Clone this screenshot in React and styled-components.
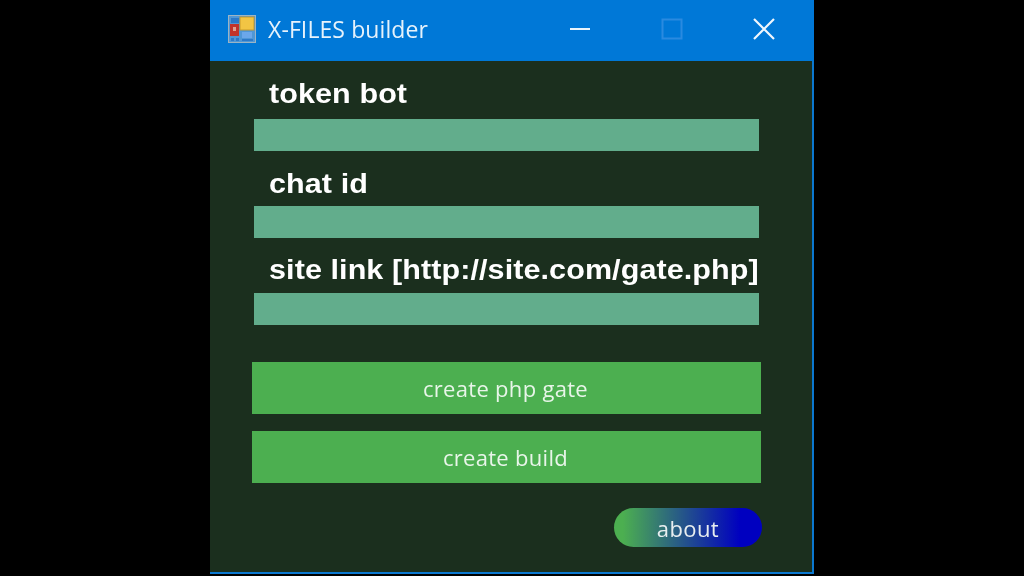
import React from "react";
import styled, { createGlobalStyle } from "styled-components";

const GlobalStyle = createGlobalStyle`
  html, body {
    margin: 0;
    padding: 0;
    width: 1024px;
    height: 576px;
    overflow: hidden;
    background: #000;
  }
`;

const Page = styled.div`
  width: 1024px;
  height: 576px;
  background: #000;
  display: flex;
  align-items: flex-start;
  padding-left: 210px;
  box-sizing: border-box;
`;

const Window = styled.div`
  width: 604px;
  height: 574px;
  box-sizing: border-box;
  background: #1b2f1e;
  border-right: 2px solid #0b78d0;
  border-bottom: 2px solid #0b78d0;
  display: flex;
  flex-direction: column;
  filter: blur(0.55px);
`;

const TitleBar = styled.div`
  height: 61px;
  margin-right: -2px;
  flex: none;
  box-sizing: border-box;
  background: #0078d7;
  display: flex;
  align-items: center;
  padding: 0 4px 4px 18px;
  color: #e6f2fb;
  font-family: "Open Sans", "Noto Sans", sans-serif;
  font-size: 23px;
`;

const AppTitle = styled.span`
  margin-left: 12px;
  flex: 1;
  letter-spacing: 0.1px;
`;

const WinButton = styled.div`
  width: 92px;
  height: 40px;
  display: flex;
  align-items: center;
  justify-content: center;
  svg {
    display: block;
  }
`;

const Form = styled.div`
  flex: 1;
  display: flex;
  flex-direction: column;
  padding: 3px 0 0 44px;
`;

const Label = styled.div`
  height: 55px;
  padding: ${(props) => props.$top}px 0 0 15px;
  box-sizing: border-box;
  color: #fff;
  font-family: "Liberation Sans", Arial, sans-serif;
  font-weight: 700;
  font-size: 28px;
  letter-spacing: 0.08px;
  line-height: 30px;
  white-space: nowrap;
`;

// the source is a stretched capture, so the letters run wider than they are tall
const LabelText = styled.span`
  display: inline-block;
  transform: scaleX(1.09);
  transform-origin: left center;
`;

const Input = styled.div`
  width: 505px;
  height: 32px;
  background: #62ad8c;
`;

const Actions = styled.div`
  display: flex;
  flex-direction: column;
  gap: 17px;
  margin: 37px 0 0 -2px;
  width: 509px;
`;

const ActionButton = styled.button`
  height: 52px;
  border: 0;
  padding: 0 2px 0 0;
  background: #4caf50;
  color: #e8f5e9;
  font-family: "Open Sans", "Noto Sans", sans-serif;
  font-size: 22px;
  letter-spacing: 0.3px;
`;

const AboutRow = styled.div`
  display: flex;
  justify-content: flex-end;
  margin: 25px 0 0 -2px;
  width: 510px;
`;

const AboutButton = styled.button`
  width: 148px;
  height: 39px;
  border: 0;
  padding: 0;
  border-radius: 20px;
  background: linear-gradient(90deg, #4caf50 6%, #0000c0 85%);
  color: #e8eef0;
  font-family: "Open Sans", "Noto Sans", sans-serif;
  font-size: 22px;
  letter-spacing: 0.4px;
`;

const AppIcon = () => (
  <svg width="28" height="28" viewBox="0 0 28 28">
    <rect x="0.5" y="0.5" width="27" height="27" fill="#4f97d6" stroke="#9cb4c4" />
    <rect x="3" y="3" width="8" height="5" fill="#2b79c9" />
    <rect x="12" y="2" width="14" height="13" fill="#f2c544" stroke="#c79a2b" />
    <rect x="2" y="9" width="9" height="12" fill="#c2332a" />
    <rect x="5" y="12" width="3" height="4" fill="#e0a090" />
    <rect x="14" y="17" width="10" height="6" fill="#6ba7ea" />
    <rect x="3" y="23" width="3" height="3" fill="#2b79c9" />
    <rect x="8" y="23" width="3" height="3" fill="#2b79c9" />
    <rect x="14" y="24" width="11" height="2" fill="#2b79c9" />
  </svg>
);

const fields = [
  { name: "token bot", top: 15 },
  { name: "chat id", top: 18 },
  { name: "site link [http://site.com/gate.php]", top: 17 },
];

export default function App() {
  return (
    <Page>
      <GlobalStyle />
      <Window>
        <TitleBar>
          <AppIcon />
          <AppTitle>X-FILES builder</AppTitle>
          <WinButton>
            <svg width="22" height="22" viewBox="0 0 22 22">
              <path d="M1 11H21" stroke="#eaf4fc" strokeWidth="2" />
            </svg>
          </WinButton>
          <WinButton>
            <svg width="22" height="22" viewBox="0 0 22 22">
              <rect x="1.5" y="1.5" width="19" height="19" fill="none" stroke="#2a8ae0" strokeWidth="2" />
            </svg>
          </WinButton>
          <WinButton>
            <svg width="22" height="22" viewBox="0 0 22 22">
              <path d="M1 1L21 21M21 1L1 21" stroke="#f0f7fd" strokeWidth="2.2" />
            </svg>
          </WinButton>
        </TitleBar>
        <Form>
          {fields.map((field) => (
            <div key={field.name}>
              <Label $top={field.top}>
                <LabelText>{field.name}</LabelText>
              </Label>
              <Input />
            </div>
          ))}
          <Actions>
            <ActionButton>create php gate</ActionButton>
            <ActionButton>create build</ActionButton>
          </Actions>
          <AboutRow>
            <AboutButton>about</AboutButton>
          </AboutRow>
        </Form>
      </Window>
    </Page>
  );
}
